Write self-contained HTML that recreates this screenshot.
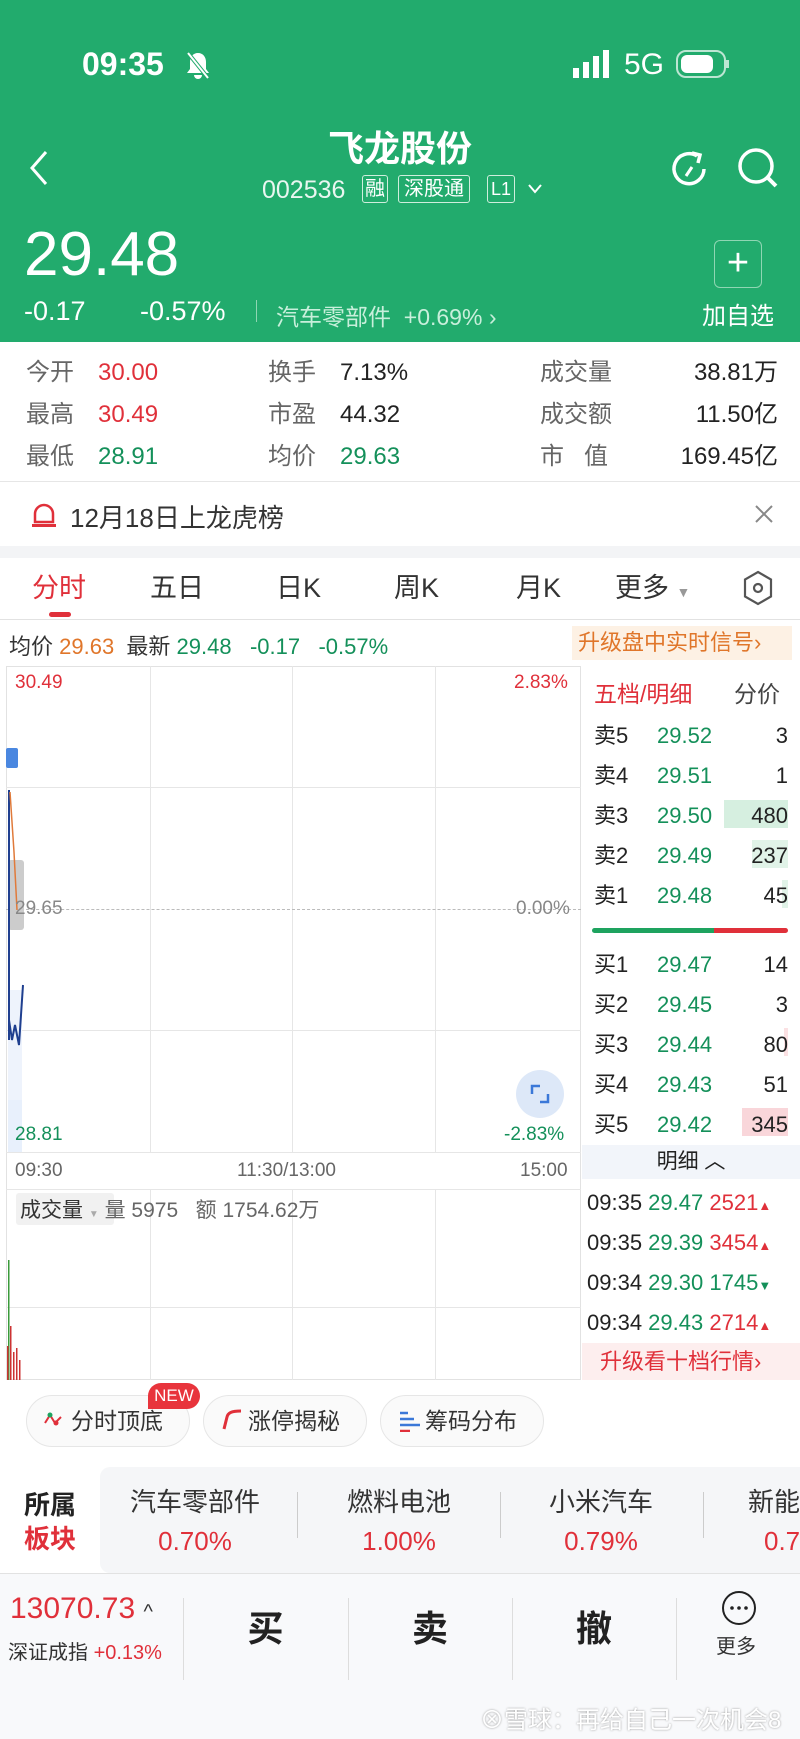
<!DOCTYPE html>
<html><head><meta charset="utf-8"><style>
*{margin:0;padding:0;box-sizing:border-box}
body{width:800px;height:1739px;position:relative;overflow:hidden;background:#fff;font-family:"Liberation Sans","Noto Sans CJK SC",sans-serif;color:#222}
.a{position:absolute;white-space:nowrap}
.g{color:#14905a}.r{color:#e0303a}.gr{color:#666}.o{color:#e0762a}
.hdr{position:absolute;left:0;top:0;width:800px;height:342px;background:#22ab6d;color:#fff}
.vl{position:absolute;width:1px;background:#e6e6e6}
.hl{position:absolute;height:1px;background:#e6e6e6}
.ob{font-size:22px}
.ob .a{line-height:30px}
</style></head><body>
<div class="hdr">
 <div class="a" style="left:82px;top:46px;font-size:32px;font-weight:bold">09:35</div>
 <svg class="a" style="left:184px;top:50px" width="28" height="30" viewBox="0 0 28 30"><path d="M14 3c-5 0-8 4-8 9v7l-3 4h22l-3-4v-7c0-5-3-9-8-9z M10 25a4 4 0 0 0 8 0" fill="#fff"/><path d="M4 3l20 25" stroke="#22ab6d" stroke-width="4"/><path d="M4 3l20 25" stroke="#fff" stroke-width="2"/></svg>
 <svg class="a" style="left:573px;top:50px" width="40" height="28"><rect x="0" y="18" width="6" height="10" fill="#fff"/><rect x="10" y="12" width="6" height="16" fill="#fff"/><rect x="20" y="6" width="6" height="22" fill="#fff"/><rect x="30" y="0" width="6" height="28" fill="#fff"/></svg>
 <div class="a" style="left:624px;top:48px;font-size:30px">5G</div>
 <svg class="a" style="left:676px;top:50px" width="54" height="28"><rect x="1" y="1" width="48" height="26" rx="9" fill="none" stroke="#fff" stroke-opacity=".7" stroke-width="2"/><rect x="5" y="5" width="32" height="18" rx="6" fill="#fff"/><rect x="50" y="10" width="3" height="8" fill="#fff" opacity=".7"/></svg>
 <svg class="a" style="left:26px;top:148px" width="24" height="40"><path d="M20 4L6 20l14 16" stroke="#fff" stroke-width="3" fill="none"/></svg>
 <div class="a" style="left:0;width:800px;text-align:center;top:120px;font-size:36px;font-weight:bold">飞龙股份</div>
 <div class="a" style="left:262px;top:176px;font-size:25px;opacity:.9">002536</div>
 <div class="a" style="left:362px;top:175px;font-size:20px;border:1.5px solid #cfeedd;border-radius:3px;padding:0 2px;line-height:26px">融</div>
 <div class="a" style="left:398px;top:175px;font-size:20px;border:1.5px solid #cfeedd;border-radius:3px;padding:0 5px;line-height:26px">深股通</div>
 <div class="a" style="left:487px;top:175px;font-size:18px;border:1.5px solid #cfeedd;border-radius:3px;padding:0 3px;line-height:26px">L1</div>
 <svg class="a" style="left:527px;top:183px" width="16" height="12"><path d="M2 2l6 7 6-7" stroke="#fff" stroke-width="2" fill="none"/></svg>
 <svg class="a" style="left:668px;top:148px" width="42" height="42"><path d="M36 21a15 15 0 1 1-7-13" stroke="#fff" stroke-width="3.5" fill="none"/><path d="M24 5l8 2-2 8" stroke="#fff" stroke-width="3.5" fill="none"/><path d="M18 28l6-9" stroke="#fff" stroke-width="3"/></svg>
 <svg class="a" style="left:736px;top:146px" width="44" height="44"><circle cx="20" cy="20" r="16" stroke="#fff" stroke-width="3.5" fill="none"/><path d="M31 31l9 9" stroke="#fff" stroke-width="4"/></svg>
 <div class="a" style="left:24px;top:220px;font-size:62px;line-height:70px">29.48</div>
 <div class="a" style="left:24px;top:296px;font-size:27px">-0.17</div>
 <div class="a" style="left:140px;top:296px;font-size:27px">-0.57%</div>
 <div class="a" style="left:256px;top:300px;width:1px;height:22px;background:#8fd6b3"></div>
 <div class="a" style="left:276px;top:298px;font-size:23px;color:#c8efdb">汽车零部件 &nbsp;+0.69% ›</div>
 <div class="a" style="left:714px;top:240px;width:48px;height:48px;border:1.5px solid #8fd6b3;border-radius:6px;text-align:center;font-size:38px;line-height:44px">+</div>
 <div class="a" style="left:702px;top:296px;font-size:24px">加自选</div>
</div>
<!-- stats -->
<div style="position:absolute;top:352px;left:0;font-size:24px;line-height:42px">
 <div class="a gr" style="left:26px;top:0">今开</div><div class="a r" style="left:98px;top:0">30.00</div>
 <div class="a gr" style="left:26px;top:42px">最高</div><div class="a r" style="left:98px;top:42px">30.49</div>
 <div class="a gr" style="left:26px;top:84px">最低</div><div class="a g" style="left:98px;top:84px">28.91</div>
 <div class="a gr" style="left:268px;top:0">换手</div><div class="a" style="left:340px;top:0">7.13%</div>
 <div class="a gr" style="left:268px;top:42px">市盈</div><div class="a" style="left:340px;top:42px">44.32</div>
 <div class="a gr" style="left:268px;top:84px">均价</div><div class="a g" style="left:340px;top:84px">29.63</div>
 <div class="a gr" style="left:540px;top:0">成交量</div><div class="a" style="left:580px;width:198px;text-align:right;top:0">38.81万</div>
 <div class="a gr" style="left:540px;top:42px">成交额</div><div class="a" style="left:580px;width:198px;text-align:right;top:42px">11.50亿</div>
 <div class="a gr" style="left:540px;top:84px">市 &nbsp;&nbsp;值</div><div class="a" style="left:580px;width:198px;text-align:right;top:84px">169.45亿</div>
</div>
<div class="a" style="left:0;top:481px;width:800px;height:1px;background:#e6e6e6"></div>
<svg class="a" style="left:30px;top:500px" width="28" height="30"><path d="M5 22v-8a9 9 0 0 1 18 0v8z" stroke="#e0303a" stroke-width="2.5" fill="none"/><path d="M2 24h24v3H2z" fill="#e0303a"/></svg>
<div class="a" style="left:70px;top:498px;font-size:26px;color:#333">12月18日上龙虎榜</div>
<svg class="a" style="left:754px;top:504px" width="20" height="20"><path d="M2 2l16 16M18 2L2 18" stroke="#888" stroke-width="2"/></svg>
<div class="a" style="left:0;top:546px;width:800px;height:12px;background:#f3f4f6"></div>
<!-- tabs -->
<div style="position:absolute;top:566px;left:0;font-size:27px;color:#333">
 <div class="a r" style="left:32px;top:0">分时</div>
 <div class="a" style="left:150px">五日</div><div class="a" style="left:276px">日K</div><div class="a" style="left:394px">周K</div><div class="a" style="left:516px">月K</div><div class="a" style="left:615px">更多 <span style="font-size:14px;color:#999">▼</span></div>
</div>
<div class="a" style="left:49px;top:612px;width:22px;height:5px;border-radius:3px;background:#e0303a"></div>
<svg class="a" style="left:742px;top:570px" width="32" height="36"><path d="M16 2l13 7.5v17L16 34 3 26.5v-17z" stroke="#555" stroke-width="2.2" fill="none"/><circle cx="16" cy="18" r="4" stroke="#555" stroke-width="2.2" fill="none"/></svg>
<div class="a" style="left:0;top:619px;width:800px;height:1px;background:#e2e2e2"></div>
<div class="a" style="left:9px;top:629px;font-size:22px;color:#333">均价 <span class="o">29.63</span> &nbsp;最新 <span class="g">29.48</span> &nbsp;&nbsp;<span class="g">-0.17</span> &nbsp;&nbsp;<span class="g">-0.57%</span></div>
<div class="a" style="left:572px;top:626px;width:220px;height:34px;background:#fdf1e4;color:#e0762a;font-size:22px;line-height:34px;padding-left:6px">升级盘中实时信号›</div>
<!-- chart -->
<div class="a" style="left:6px;top:666px;width:575px;height:714px;border:1px solid #e2e2e2"></div>
<div class="vl" style="left:150px;top:666px;height:486px"></div><div class="vl" style="left:292px;top:666px;height:486px"></div><div class="vl" style="left:435px;top:666px;height:486px"></div>
<div class="hl" style="left:6px;top:787px;width:575px"></div><div class="hl" style="left:6px;top:1030px;width:575px"></div>
<div class="hl" style="left:6px;top:1152px;width:575px"></div>
<div class="a" style="left:6px;top:909px;width:575px;border-top:1.5px dashed #bbb"></div>
<div class="a" style="left:8px;top:1100px;width:14px;height:52px;background:#e8f0fc"></div>
<div class="a" style="left:8px;top:990px;width:14px;height:110px;background:#eef3fc"></div>
<div class="a" style="left:8px;top:860px;width:16px;height:70px;background:#ccc;border-radius:3px"></div>
<div class="a" style="left:6px;top:748px;width:12px;height:20px;background:#4a87e0;border-radius:2px"></div>
<svg class="a" style="left:6px;top:790px" width="20" height="290"><path d="M3 0L3 250 M3 230l3 20 3-15 4 20 4-60" stroke="#1f3f8f" stroke-width="2" fill="none"/><path d="M4 2l4 60 3 58" stroke="#e07a3a" stroke-width="1.5" fill="none"/></svg>
<div class="a r" style="left:15px;top:672px;font-size:19px">30.49</div>
<div class="a r" style="left:514px;top:672px;font-size:19px">2.83%</div>
<div class="a gr" style="left:15px;top:898px;font-size:19px;color:#888">29.65</div>
<div class="a" style="left:516px;top:898px;font-size:19px;color:#888">0.00%</div>
<div class="a g" style="left:15px;top:1124px;font-size:19px">28.81</div>
<div class="a g" style="left:504px;top:1124px;font-size:19px">-2.83%</div>
<div class="a" style="left:516px;top:1070px;width:48px;height:48px;border-radius:50%;background:#dde8f8"></div>
<svg class="a" style="left:530px;top:1084px" width="20" height="20"><path d="M2 10V2h8M18 10v8h-8" stroke="#3b78d8" stroke-width="2.5" fill="none"/></svg>
<div class="a gr" style="left:15px;top:1160px;font-size:19px">09:30</div>
<div class="a gr" style="left:237px;top:1160px;font-size:19px">11:30/13:00</div>
<div class="a gr" style="left:520px;top:1160px;font-size:19px">15:00</div>
<div class="hl" style="left:6px;top:1189px;width:575px"></div>
<div class="vl" style="left:150px;top:1189px;height:191px"></div><div class="vl" style="left:292px;top:1189px;height:191px"></div><div class="vl" style="left:435px;top:1189px;height:191px"></div>
<div class="hl" style="left:6px;top:1307px;width:575px"></div>
<div class="a" style="left:16px;top:1193px;width:98px;height:32px;background:#f1f1f1;border-radius:3px"></div>
<div class="a" style="left:20px;top:1194px;font-size:21px;color:#333">成交量 <span style="font-size:10px;color:#aaa">▼</span> <span class="gr">量 5975 &nbsp;&nbsp;额 1754.62万</span></div>
<svg class="a" style="left:6px;top:1260px" width="20" height="120"><rect x="2" y="0" width="1.5" height="120" fill="#3a9a3a"/><rect x="1" y="86" width="1.5" height="34" fill="#c33"/><rect x="4" y="66" width="1.5" height="54" fill="#c33"/><rect x="7" y="92" width="1.5" height="28" fill="#c33"/><rect x="10" y="88" width="1.5" height="32" fill="#c33"/><rect x="13" y="100" width="1.5" height="20" fill="#c33"/></svg>
<!-- order book -->
<div class="a r" style="left:594px;top:675px;font-size:23px">五档/明细</div>
<div class="a gr" style="left:734px;top:675px;font-size:23px;color:#444">分价</div>
<div class="a" style="left:724px;top:800px;width:64px;height:28px;background:#d6efe0"></div>
<div class="a" style="left:752px;top:840px;width:36px;height:28px;background:#e1f3e8"></div>
<div class="a" style="left:782px;top:880px;width:6px;height:28px;background:#e1f3e8"></div>
<div class="a" style="left:784px;top:1028px;width:4px;height:28px;background:#fbe1e3"></div>
<div class="a" style="left:742px;top:1108px;width:46px;height:28px;background:#f9d6da"></div>
<div class="a" style="left:592px;top:928px;width:122px;height:5px;background:#1ea35f;border-radius:3px 0 0 3px"></div>
<div class="a" style="left:714px;top:928px;width:74px;height:5px;background:#e0303a;border-radius:0 3px 3px 0"></div>
<div class="ob">
 <div class="a" style="left:594px;top:721px">卖5</div><div class="a g" style="left:657px;top:721px">29.52</div><div class="a" style="left:700px;width:88px;text-align:right;top:721px">3</div>
 <div class="a" style="left:594px;top:761px">卖4</div><div class="a g" style="left:657px;top:761px">29.51</div><div class="a" style="left:700px;width:88px;text-align:right;top:761px">1</div>
 <div class="a" style="left:594px;top:801px">卖3</div><div class="a g" style="left:657px;top:801px">29.50</div><div class="a" style="left:700px;width:88px;text-align:right;top:801px">480</div>
 <div class="a" style="left:594px;top:841px">卖2</div><div class="a g" style="left:657px;top:841px">29.49</div><div class="a" style="left:700px;width:88px;text-align:right;top:841px">237</div>
 <div class="a" style="left:594px;top:881px">卖1</div><div class="a g" style="left:657px;top:881px">29.48</div><div class="a" style="left:700px;width:88px;text-align:right;top:881px">45</div>
 <div class="a" style="left:594px;top:950px">买1</div><div class="a g" style="left:657px;top:950px">29.47</div><div class="a" style="left:700px;width:88px;text-align:right;top:950px">14</div>
 <div class="a" style="left:594px;top:990px">买2</div><div class="a g" style="left:657px;top:990px">29.45</div><div class="a" style="left:700px;width:88px;text-align:right;top:990px">3</div>
 <div class="a" style="left:594px;top:1030px">买3</div><div class="a g" style="left:657px;top:1030px">29.44</div><div class="a" style="left:700px;width:88px;text-align:right;top:1030px">80</div>
 <div class="a" style="left:594px;top:1070px">买4</div><div class="a g" style="left:657px;top:1070px">29.43</div><div class="a" style="left:700px;width:88px;text-align:right;top:1070px">51</div>
 <div class="a" style="left:594px;top:1110px">买5</div><div class="a g" style="left:657px;top:1110px">29.42</div><div class="a" style="left:700px;width:88px;text-align:right;top:1110px">345</div>
</div>
<div class="a" style="left:582px;top:1145px;width:218px;height:34px;background:#f2f5fa;text-align:center;font-size:21px;line-height:34px">明细 ︿</div>
<div class="ob" style="font-size:22px">
 <div class="a" style="left:587px;top:1188px">09:35 <span class="g">29.47</span> <span class="r">2521</span><span class="r" style="font-size:13px">▲</span></div>
 <div class="a" style="left:587px;top:1228px">09:35 <span class="g">29.39</span> <span class="r">3454</span><span class="r" style="font-size:13px">▲</span></div>
 <div class="a" style="left:587px;top:1268px">09:34 <span class="g">29.30</span> <span class="g">1745</span><span class="g" style="font-size:13px">▼</span></div>
 <div class="a" style="left:587px;top:1308px">09:34 <span class="g">29.43</span> <span class="r">2714</span><span class="r" style="font-size:13px">▲</span></div>
</div>
<div class="a" style="left:582px;top:1343px;width:218px;height:37px;background:#fdeeee;color:#e0303a;font-size:22px;line-height:37px;padding-left:18px">升级看十档行情›</div>
<!-- chips -->
<div class="a" style="left:26px;top:1395px;width:164px;height:52px;border:1.5px solid #e6e6e6;border-radius:26px;background:#fafafa;font-size:23px;line-height:50px;padding-left:44px;color:#333">分时顶底</div>
<svg class="a" style="left:42px;top:1407px" width="24" height="24"><path d="M3 16l5-8 5 8 6-6" stroke="#e0303a" stroke-width="2" fill="none"/><circle cx="8" cy="8" r="2.5" fill="#1ea35f"/><circle cx="14" cy="16" r="2.5" fill="#e0303a"/></svg>
<div class="a" style="left:148px;top:1383px;width:52px;height:26px;border-radius:13px 13px 13px 0;background:#e8343c;color:#fff;font-size:17px;line-height:26px;text-align:center">NEW</div>
<div class="a" style="left:203px;top:1395px;width:164px;height:52px;border:1.5px solid #e6e6e6;border-radius:26px;background:#fafafa;font-size:23px;line-height:50px;padding-left:44px;color:#333">涨停揭秘</div>
<svg class="a" style="left:221px;top:1407px" width="24" height="24"><path d="M3 22l3-12c1-4 4-6 14-6" stroke="#e0303a" stroke-width="3" fill="none"/></svg>
<div class="a" style="left:380px;top:1395px;width:164px;height:52px;border:1.5px solid #e6e6e6;border-radius:26px;background:#fafafa;font-size:23px;line-height:50px;padding-left:44px;color:#333">筹码分布</div>
<svg class="a" style="left:398px;top:1410px" width="24" height="22"><path d="M2 3h8M2 9h14M2 15h20" stroke="#3b78d8" stroke-width="2.5"/><path d="M2 21h10" stroke="#e0303a" stroke-width="2.5"/></svg>
<!-- sectors -->
<div class="a" style="left:24px;top:1488px;font-size:26px;font-weight:bold;line-height:34px">所属<br><span class="r">板块</span></div>
<div class="a" style="left:100px;top:1467px;width:700px;height:106px;background:#f5f6f8;border-radius:10px 0 0 10px"></div>
<div class="a" style="left:100px;top:1482px;width:190px;text-align:center;font-size:26px;color:#333">汽车零部件</div>
<div class="a r" style="left:100px;top:1526px;width:190px;text-align:center;font-size:26px">0.70%</div>
<div class="a" style="left:297px;top:1492px;width:1px;height:46px;background:#ccc"></div>
<div class="a" style="left:304px;top:1482px;width:190px;text-align:center;font-size:26px;color:#333">燃料电池</div>
<div class="a r" style="left:304px;top:1526px;width:190px;text-align:center;font-size:26px">1.00%</div>
<div class="a" style="left:500px;top:1492px;width:1px;height:46px;background:#ccc"></div>
<div class="a" style="left:506px;top:1482px;width:190px;text-align:center;font-size:26px;color:#333">小米汽车</div>
<div class="a r" style="left:506px;top:1526px;width:190px;text-align:center;font-size:26px">0.79%</div>
<div class="a" style="left:703px;top:1492px;width:1px;height:46px;background:#ccc"></div>
<div class="a" style="left:748px;top:1482px;font-size:26px;color:#333">新能</div>
<div class="a r" style="left:764px;top:1526px;font-size:26px">0.7</div>
<!-- bottom -->
<div class="a" style="left:0;top:1573px;width:800px;height:166px;background:#f8f9fb;border-top:1px solid #e2e2e2"></div>
<div class="a r" style="left:10px;top:1592px;font-size:30px">13070.73 <span style="color:#333;font-size:20px">^</span></div>
<div class="a" style="left:8px;top:1636px;font-size:20px;color:#333">深证成指 <span class="r">+0.13%</span></div>
<div class="a" style="left:183px;top:1598px;width:1px;height:82px;background:#ddd"></div>
<div class="a" style="left:348px;top:1598px;width:1px;height:82px;background:#ddd"></div>
<div class="a" style="left:512px;top:1598px;width:1px;height:82px;background:#ddd"></div>
<div class="a" style="left:676px;top:1598px;width:1px;height:82px;background:#ddd"></div>
<div class="a" style="left:183px;width:165px;text-align:center;top:1600px;font-size:36px;font-weight:bold">买</div>
<div class="a" style="left:348px;width:164px;text-align:center;top:1600px;font-size:36px;font-weight:bold">卖</div>
<div class="a" style="left:512px;width:164px;text-align:center;top:1600px;font-size:36px;font-weight:bold">撤</div>
<svg class="a" style="left:721px;top:1590px" width="36" height="36"><circle cx="18" cy="18" r="16" stroke="#222" stroke-width="2" fill="none"/><circle cx="11" cy="18" r="1.8" fill="#222"/><circle cx="18" cy="18" r="1.8" fill="#222"/><circle cx="25" cy="18" r="1.8" fill="#222"/></svg>
<div class="a" style="left:716px;top:1630px;font-size:20px;color:#333">更多</div>
<div class="a" style="left:480px;top:1700px;font-size:24px;color:#fff;text-shadow:0 0 2px #999">⊗雪球：再给自己一次机会8</div>
</body></html>
